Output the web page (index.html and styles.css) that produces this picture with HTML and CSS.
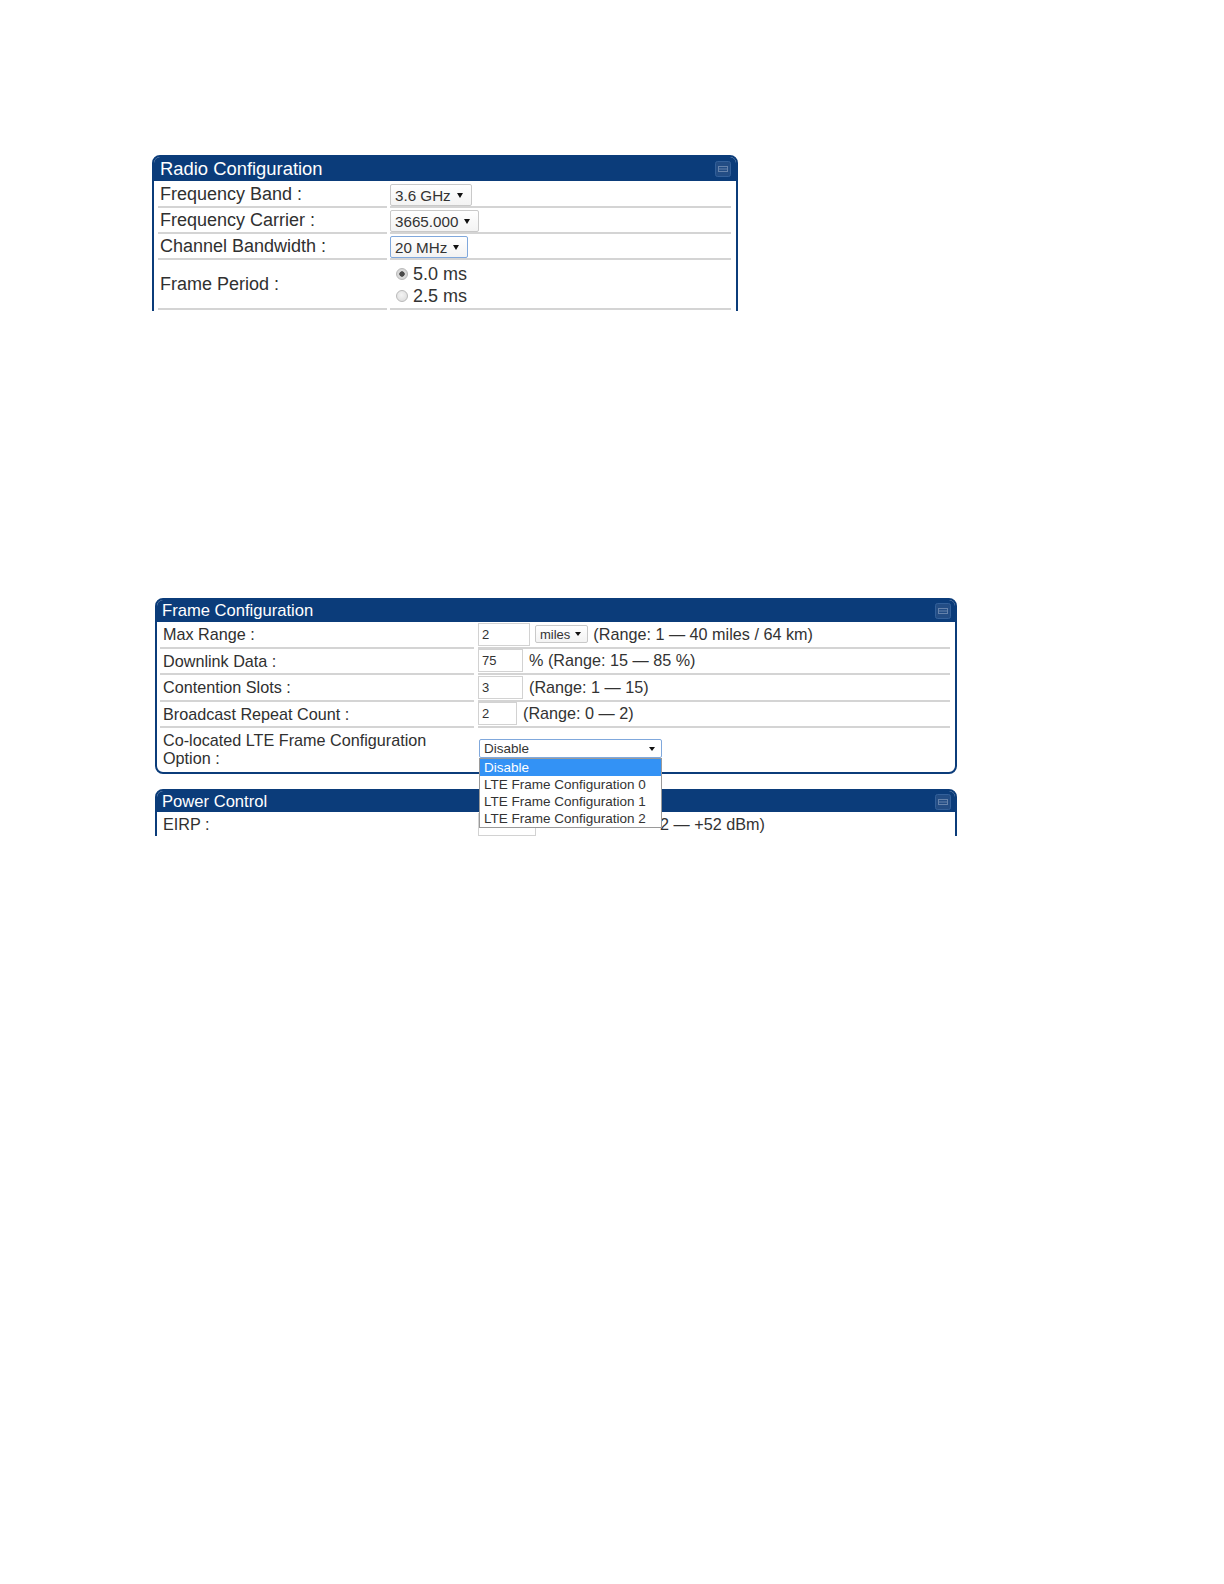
FILE: index.html
```html
<!DOCTYPE html>
<html lang="en">
<head>
<meta charset="utf-8">
<title>Radio and Frame Configuration</title>
<link rel="stylesheet" href="styles.css">
</head>
<body>
<div class="crop crop-radio">
  <section class="panel panel-radio">
    <header class="panel-head">
      <span class="panel-title">Radio Configuration</span>
      <span class="collapse"><svg width="16" height="16" viewBox="0 0 16 16"><rect x="0.5" y="0.5" width="15" height="15" rx="2" fill="#234d85" stroke="#33609a"/><rect x="3.5" y="5.5" width="9" height="5" fill="none" stroke="#6582ab"/><line x1="4" y1="8" x2="12" y2="8" stroke="#6582ab"/></svg></span>
    </header>
    <div class="rows rows-radio">
      <div class="cell label">Frequency Band :</div>
      <div class="cell value"><span class="select">3.6 GHz<i class="caret"></i></span></div>
      <div class="cell label">Frequency Carrier :</div>
      <div class="cell value"><span class="select">3665.000<i class="caret"></i></span></div>
      <div class="cell label">Channel Bandwidth :</div>
      <div class="cell value"><span class="select focused">20 MHz<i class="caret"></i></span></div>
      <div class="cell label tall">Frame Period :</div>
      <div class="cell value tall">
        <div class="radios">
          <div class="radio-line"><span class="radio checked"></span>5.0 ms</div>
          <div class="radio-line"><span class="radio"></span>2.5 ms</div>
        </div>
      </div>
    </div>
  </section>
</div>

<div class="crop crop-frame">
  <section class="panel panel-frame">
    <header class="panel-head">
      <span class="panel-title">Frame Configuration</span>
      <span class="collapse"><svg width="16" height="16" viewBox="0 0 16 16"><rect x="0.5" y="0.5" width="15" height="15" rx="2" fill="#234d85" stroke="#33609a"/><rect x="3.5" y="5.5" width="9" height="5" fill="none" stroke="#6582ab"/><line x1="4" y1="8" x2="12" y2="8" stroke="#6582ab"/></svg></span>
    </header>
    <div class="rows rows-frame">
      <div class="cell label">Max Range :</div>
      <div class="cell value"><span class="inp w53">2</span><span class="select small">miles<i class="caret"></i></span><span class="hint h-miles">(Range: 1 — 40 miles / 64 km)</span></div>
      <div class="cell label">Downlink Data :</div>
      <div class="cell value"><span class="inp w46">75</span><span class="hint">% (Range: 15 — 85 %)</span></div>
      <div class="cell label">Contention Slots :</div>
      <div class="cell value"><span class="inp w46">3</span><span class="hint">(Range: 1 — 15)</span></div>
      <div class="cell label">Broadcast Repeat Count :</div>
      <div class="cell value"><span class="inp w40">2</span><span class="hint">(Range: 0 — 2)</span></div>
      <div class="cell label last"><span class="wrap-label">Co-located LTE Frame Configuration Option :</span></div>
      <div class="cell value last">
        <div class="combo">
          <span class="select wide focused"><span class="combo-text">Disable</span><i class="caret"></i></span>
          <ul class="listbox">
            <li class="opt hl">Disable</li>
            <li class="opt">LTE Frame Configuration 0</li>
            <li class="opt">LTE Frame Configuration 1</li>
            <li class="opt">LTE Frame Configuration 2</li>
          </ul>
        </div>
      </div>
    </div>
  </section>

  <section class="panel panel-power">
    <header class="panel-head">
      <span class="panel-title">Power Control</span>
      <span class="collapse"><svg width="16" height="16" viewBox="0 0 16 16"><rect x="0.5" y="0.5" width="15" height="15" rx="2" fill="#234d85" stroke="#33609a"/><rect x="3.5" y="5.5" width="9" height="5" fill="none" stroke="#6582ab"/><line x1="4" y1="8" x2="12" y2="8" stroke="#6582ab"/></svg></span>
    </header>
    <div class="rows rows-frame">
      <div class="cell label">EIRP :</div>
      <div class="cell value"><span class="inp w58"></span><span class="hint h-eirp">2 — +52 dBm)</span></div>
    </div>
  </section>
</div>
</body>
</html>
```

FILE: styles.css
```css
html, body {
  margin: 0;
  padding: 0;
  background: #ffffff;
}

body {
  font-family: "Liberation Sans", Arial, Helvetica, sans-serif;
  color: #333333;
}

.crop {
  overflow: hidden;
}

.crop-radio {
  margin: 155px 0 0 152px;
  width: 592px;
  height: 156px;
}

.crop-frame {
  margin: 287px 0 0 155px;
  width: 810px;
  height: 238px;
}

/* Panels */
.panel {
  box-sizing: border-box;
  border: 2px solid #0b3c7a;
  border-radius: 8px 8px 0 0;
  background: #ffffff;
}

.panel-radio {
  width: 586px;
  min-height: 220px;
}

.panel-frame,
.panel-power {
  width: 802px;
}

.panel-frame {
  border-radius: 8px;
}

.panel-power {
  margin-top: 15px;
  min-height: 120px;
}

.panel-head {
  display: flex;
  align-items: center;
  justify-content: space-between;
  background: #0b3c7a;
  color: #ffffff;
  border-radius: 6px 6px 0 0;
}

.panel-radio .panel-head {
  height: 24px;
  padding: 0 5px 0 6px;
  font-size: 18.4px;
}

.panel-frame .panel-head {
  height: 22px;
  padding: 0 4px 0 5px;
  font-size: 16.6px;
}

.panel-power .panel-head {
  height: 21px;
  padding: 0 4px 0 5px;
  font-size: 16.6px;
}

.panel-title {
  white-space: nowrap;
}

.collapse {
  display: flex;
  width: 16px;
  height: 16px;
}

/* Rows */
.rows {
  display: grid;
}

.rows-radio {
  grid-template-columns: 229px 341px;
  column-gap: 3px;
  padding: 1px 5px 0 4px;
}

.rows-frame {
  grid-template-columns: 314px 472px;
  column-gap: 4px;
  padding: 0 5px 0 3px;
}

.cell {
  box-sizing: border-box;
  border-bottom: 2px solid #d4d4d4;
  display: flex;
  align-items: center;
}

.rows-radio .cell {
  height: 26px;
}

.rows-radio .cell.tall {
  height: 50px;
}

.rows-frame .cell {
  height: 26.5px;
}

.rows-frame .cell.last {
  height: 44px;
  border-bottom: none;
}

.label {
  color: #303030;
}

.rows-radio .label {
  font-size: 18px;
  padding-left: 2px;
}

.rows-frame .label {
  font-size: 16.2px;
  line-height: 18px;
  padding-left: 3px;
}

.rows-frame .label.last {
  padding-bottom: 2px;
}

.wrap-label {
  display: block;
  max-width: 290px;
}

.value {
  font-size: 16.2px;
}

/* Select boxes */
.select {
  display: inline-flex;
  align-items: center;
  box-sizing: border-box;
  height: 22px;
  margin: 2px 0 0 0;
  padding: 0 8px 0 4px;
  border: 1px solid #c9c9c9;
  border-radius: 2px;
  background: linear-gradient(#ffffff, #f3f3f3);
  font-size: 15.2px;
  color: #333333;
  white-space: nowrap;
}

.select.focused {
  border-color: #80a8dc;
}

.caret {
  display: inline-block;
  width: 0;
  height: 0;
  margin-left: 6px;
  border-left: 3.5px solid transparent;
  border-right: 3.5px solid transparent;
  border-top: 5px solid #111111;
}

.select.small {
  height: 18px;
  margin: 0 0 0 5px;
  padding: 0 6px 0 4px;
  font-size: 13px;
}

.select.small .caret {
  margin-left: 5px;
  border-left-width: 3px;
  border-right-width: 3px;
  border-top-width: 4px;
}

.select.wide {
  width: 183px;
  height: 19px;
  margin: 0;
  padding: 0 6px 0 4px;
  justify-content: space-between;
  font-size: 13.5px;
  background: #ffffff;
}

.select.wide .caret {
  border-left-width: 3px;
  border-right-width: 3px;
  border-top-width: 4px;
}

/* Radios */
.radios {
  display: flex;
  flex-direction: column;
  margin-left: 6px;
  padding-top: 2px;
}

.radio-line {
  display: flex;
  align-items: center;
  height: 22px;
  font-size: 18px;
  color: #333333;
}

.radio {
  box-sizing: border-box;
  width: 12px;
  height: 12px;
  margin-right: 5px;
  border-radius: 50%;
  border: 1px solid #b9b9b9;
  background: radial-gradient(circle at 45% 40%, #f4f4f4 0%, #d8d8d8 100%);
}

.radio.checked {
  background: radial-gradient(circle, #4a4a4a 0, #4a4a4a 2.4px, #dcdcdc 3px, #cfcfcf 100%);
}

/* Inputs */
.inp {
  box-sizing: border-box;
  display: inline-flex;
  align-items: center;
  height: 23px;
  padding-left: 3px;
  border: 1px solid #d2d2d2;
  background: #ffffff;
  font-size: 13px;
  color: #333333;
}

.w40 { width: 39px; }
.w46 { width: 45px; }
.w53 { width: 52px; }
.w58 { width: 58px; }

.hint {
  margin-left: 6px;
  white-space: nowrap;
  color: #333333;
}

.hint.h-miles {
  margin-left: 5px;
}

.hint.h-eirp {
  margin-left: 124px;
}

/* Dropdown overlay */
.combo {
  position: relative;
  margin-left: 1px;
  margin-top: -4px;
}

.listbox {
  position: absolute;
  top: 100%;
  left: 0;
  box-sizing: border-box;
  width: 183px;
  margin: 0;
  padding: 0;
  list-style: none;
  background: #ffffff;
  border: 1px solid #9a9a9a;
  z-index: 5;
}

.opt {
  height: 17px;
  line-height: 17px;
  padding-left: 4px;
  font-size: 13.5px;
  color: #333333;
  white-space: nowrap;
}

.opt.hl {
  background: #3392f5;
  color: #ffffff;
}
```
